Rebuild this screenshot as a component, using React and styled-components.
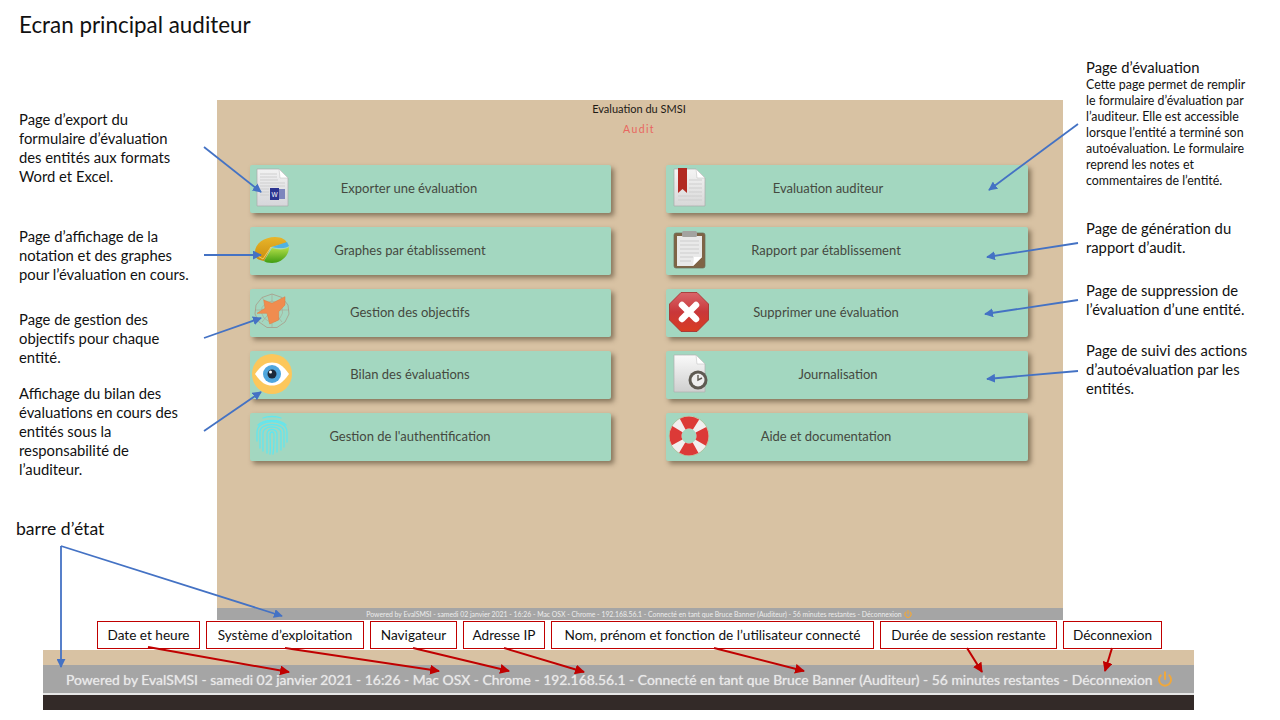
import styled, { createGlobalStyle } from "styled-components";
import { Power } from "lucide-react";

const GlobalStyle = createGlobalStyle`
  html, body {
    margin: 0;
    padding: 0;
    background: #fff;
  }
`;

const Slide = styled.div`
  position: relative;
  width: 1280px;
  height: 720px;
  overflow: hidden;
  background: #fff;
  color: #111;
  font-family: Lato, "Open Sans", sans-serif;
`;

const Title = styled.h1`
  margin: 0;
  height: 58px;
  box-sizing: border-box;
  padding: 11px 0 0 19px;
  font-size: 22.4px;
  line-height: 28px;
  font-weight: 400;
`;

const Main = styled.div`
  display: grid;
  grid-template-columns: 217px 846px 217px;
  height: 562px;
`;

const NoteColumn = styled.div`
  display: flex;
  flex-direction: column;
  padding-left: ${(p) => p.$left}px;
`;

const Note = styled.p`
  margin: ${(p) => p.$top}px 0 0 ${(p) => p.$shift || 0}px;
  font-size: ${(p) => p.$size || 14.8}px;
  line-height: 19px;
  white-space: nowrap;
`;

const NoteDetail = styled.span`
  display: block;
  font-size: 12.4px;
  line-height: 16px;
`;

const Panel = styled.div`
  margin-top: 42px;
  display: flex;
  flex-direction: column;
  background: #d8c2a3;
`;

const AppName = styled.div`
  margin-top: 2px;
  padding-right: 2px;
  text-align: center;
  font-size: 11px;
  line-height: 13px;
  color: #1d1a16;
`;

const RoleName = styled.div`
  margin-top: 8px;
  padding-right: 2px;
  text-align: center;
  font-size: 10.5px;
  line-height: 13px;
  letter-spacing: 1.4px;
  color: #e8665f;
`;

const CardGrid = styled.div`
  flex: 1;
  display: grid;
  grid-template-columns: 361px 362px;
  grid-auto-flow: column;
  grid-template-rows: repeat(5, 48px);
  column-gap: 55px;
  row-gap: 14px;
  padding: 29px 0 0 33px;
`;

const Card = styled.div`
  display: grid;
  grid-template-columns: 320px 1fr;
  align-items: center;
  border-radius: 2px;
  background: #a3d7c0;
  box-shadow: 3px 3px 5px rgba(70, 55, 35, 0.55);
`;

const CardIcon = styled.svg`
  grid-area: 1 / 1;
  justify-self: start;
  width: 40px;
  height: 40px;
  margin-left: ${(p) => p.$left}px;
  margin-top: -2px;
  overflow: visible;
`;

const CardLabel = styled.span`
  grid-area: 1 / 1;
  justify-self: center;
  margin: 0 0 2px ${(p) => p.$nudge || 0}px;
  font-size: 13px;
  color: #45493f;
`;

const PanelStatus = styled.div`
  display: flex;
  align-items: center;
  justify-content: center;
  gap: 2px;
  height: 12px;
  padding-right: 2px;
  background: #a5a5a5;
  font-size: 6.85px;
  color: #ececec;
  white-space: nowrap;
`;

const Callouts = styled.div`
  display: flex;
  gap: 6px;
  margin: 1px 0 0 97px;
`;

const Callout = styled.div`
  box-sizing: border-box;
  width: ${(p) => p.$width}px;
  height: 28px;
  border: 1px solid #c00000;
  background: #fff;
  text-align: center;
  font-size: 13.6px;
  line-height: 26px;
  white-space: nowrap;
`;

const BarCrop = styled.div`
  display: flex;
  flex-direction: column;
  width: 1151px;
  height: 60px;
  margin: 1px 0 0 43px;
  background: #d8c2a3;
`;

const BarStatus = styled.div`
  display: flex;
  align-items: center;
  gap: 4px;
  height: 28px;
  margin-top: 15px;
  padding-left: 23px;
  background: #a5a5a5;
  font-size: 13.9px;
  color: #e9e9e9;
  text-shadow: 0 0 1px rgba(255, 255, 255, 0.6);
  white-space: nowrap;
`;

const BarFooter = styled.div`
  flex: 1;
  border-top: 2px solid #e6e6e6;
  background: #332a28;
`;

const Arrows = styled.svg`
  position: absolute;
  inset: 0;
  width: 1280px;
  height: 720px;
  pointer-events: none;
`;

const WordIcon = () => (
  <CardIcon $left={2} viewBox="0 0 40 40">
    <defs>
      <linearGradient id="paperA" x1="0" y1="0" x2="0" y2="1">
        <stop offset="0" stopColor="#f2f2f2" />
        <stop offset="1" stopColor="#d6d6da" />
      </linearGradient>
    </defs>
    <path d="M5 1H27L36 10V38H5Z" fill="url(#paperA)" stroke="#aaa" strokeWidth="0.7" />
    <path d="M27 1L36 10H28Z" fill="#fff" stroke="#bbb" strokeWidth="0.5" />
    <path d="M8 6H25M8 9H25M8 12H26M8 15H33M8 18H33M8 21H17M8 24H17M8 27H17" stroke="#ccc" strokeWidth="0.9" />
    <rect x="22" y="21" width="11" height="10" fill="#7d85bd" />
    <rect x="18" y="20" width="9" height="12" fill="#2b3390" />
    <text x="22.5" y="28.5" fontSize="6.5" fill="#fff" textAnchor="middle" fontFamily="Liberation Sans">W</text>
  </CardIcon>
);

const PieIcon = () => (
  <CardIcon $left={2} viewBox="0 0 40 40">
    <defs>
      <linearGradient id="pieY" x1="0" y1="0" x2="0" y2="1">
        <stop offset="0" stopColor="#e8b52a" />
        <stop offset="1" stopColor="#c98c0e" />
      </linearGradient>
      <linearGradient id="pieG" x1="0" y1="0" x2="0" y2="1">
        <stop offset="0" stopColor="#b6e04a" />
        <stop offset="1" stopColor="#3f9c12" />
      </linearGradient>
    </defs>
    <path d="M3 24C2 14 12 7 23 7C30 7 34 10 35 13L19 17L12 31C6 30 3 28 3 24Z" fill="url(#pieY)" />
    <path d="M20 17L35 12L37 16C35 18 28 19 20 17Z" fill="#4fb2e4" />
    <path d="M20 18C26 20 33 20 37 17C37 27 28 33 20 33C16 33 13 32 12 31Z" fill="url(#pieG)" />
    <path d="M4 25L11 29L19 17" fill="none" stroke="#f7dc70" strokeWidth="0.8" />
  </CardIcon>
);

const RadarIcon = () => (
  <CardIcon $left={2} viewBox="0 0 40 40">
    <g fill="none" stroke="#a89a88" strokeWidth="0.8">
      <path d="M20 2L30 5.5L36 13L37 22L33 30L25 35.5L15 35.5L7 30L3 22L4 13L10 5.5Z" />
      <path d="M20 9L26 11L30 15.500L30.500 21L28 26L23 29.500L17 29.500L12 26L9.500 21L10 15.500L14 11Z" strokeWidth="0.5" />
      <path d="M20 2V35M10 5.5L30 30M30 5.5L10 30M3 18H37" strokeWidth="0.5" />
    </g>
    <path
      d="M11.700 8L20 11.300L33 4.700L33 13L26.700 19.700L26.700 28L17.700 32L15 21.300L5 21.300L13 16.300Z"
      fill="#f08c4f"
      stroke="#e07a3c"
      strokeWidth="0.5"
    />
  </CardIcon>
);

const EyeIcon = () => (
  <CardIcon $left={2} viewBox="0 0 40 40">
    <circle cx="20" cy="20" r="20" fill="#fcc75b" />
    <path d="M3 20C9 11 14 8.500 20 8.500C26 8.500 31 11 37 20C31 29 26 31.500 20 31.500C14 31.500 9 29 3 20Z" fill="#fff" />
    <circle cx="20" cy="20" r="9" fill="#4fa6dd" />
    <circle cx="20" cy="20" r="4.500" fill="#1e2b3a" />
    <circle cx="18.500" cy="18" r="1.500" fill="#fff" />
  </CardIcon>
);

const FingerprintIcon = () => (
  <CardIcon $left={2} viewBox="0 0 40 40">
    <g fill="none" stroke="#62e6ee" strokeWidth="1.3" strokeLinecap="round">
      <path d="M11 2C16 0 24 0 29 2" />
      <path d="M6 9C12 3 28 3 34 9" />
      <path d="M5 25V16C5 2 35 2 35 16V26" />
      <path d="M8 32V16C8 6 32 6 32 16V31" />
      <path d="M11 35V17C11 9 29 9 29 17V34" />
      <path d="M15 37V18C15 12 25 12 25 18V36" />
      <path d="M18 38C19 32 18 24 18 19C18 15 22 15 22 19C22 26 22 32 21 38" />
    </g>
  </CardIcon>
);

const BookmarkIcon = () => (
  <CardIcon $left={3} viewBox="0 0 40 40">
    <defs>
      <linearGradient id="paperB" x1="0" y1="0" x2="0" y2="1">
        <stop offset="0" stopColor="#f4f4f4" />
        <stop offset="1" stopColor="#d8d8d8" />
      </linearGradient>
    </defs>
    <path d="M5 1H27L36 10V38H5Z" fill="url(#paperB)" stroke="#aaa" strokeWidth="0.7" />
    <path d="M27 1L36 10H28Z" fill="#fff" stroke="#bbb" strokeWidth="0.5" />
    <path d="M20 12H33M20 16H33M20 20H33M20 24H33M9 28H33M9 32H33" stroke="#ccc" strokeWidth="0.9" />
    <path d="M9 0H18V25L13.500 21L9 25Z" fill="#b22a22" />
  </CardIcon>
);

const ClipboardIcon = () => (
  <CardIcon $left={3} viewBox="0 0 40 40">
    <rect x="5" y="3" width="31" height="35" rx="2" fill="#7f6446" stroke="#6a6a58" strokeWidth="0.7" />
    <path d="M8 6H33V27L24 36H8Z" fill="#e9e9e9" />
    <path d="M24 36L33 27H25Z" fill="#fff" />
    <path d="M11 11H30M11 15H30M11 19H30M11 23H30M11 27H24M11 31H22" stroke="#c9c9c9" strokeWidth="0.9" />
    <rect x="13" y="1" width="15" height="6" rx="1.500" fill="#a3a3a0" />
  </CardIcon>
);

const StopIcon = () => (
  <CardIcon $left={3} viewBox="0 0 40 40">
    <defs>
      <linearGradient id="stopRed" x1="0" y1="0" x2="0" y2="1">
        <stop offset="0" stopColor="#d9666a" />
        <stop offset="0.5" stopColor="#c9373a" />
        <stop offset="1" stopColor="#d93c22" />
      </linearGradient>
    </defs>
    <path d="M12 0.500H28L39.500 12V28L28 39.500H12L0.500 28V12Z" fill="url(#stopRed)" stroke="#a52a2a" strokeWidth="0.8" />
    <path d="M13 13L27 27M27 13L13 27" stroke="#fff" strokeWidth="6.500" strokeLinecap="round" />
  </CardIcon>
);

const ClockDocIcon = () => (
  <CardIcon $left={3} viewBox="0 0 40 40">
    <defs>
      <linearGradient id="paperC" x1="0" y1="0" x2="0" y2="1">
        <stop offset="0" stopColor="#fafafa" />
        <stop offset="1" stopColor="#cfcfcf" />
      </linearGradient>
    </defs>
    <path d="M5 1H27L36 10V38H5Z" fill="url(#paperC)" stroke="#b0b0b0" strokeWidth="0.7" />
    <path d="M27 1L36 10H28Z" fill="#fff" stroke="#bbb" strokeWidth="0.5" />
    <circle cx="29" cy="26" r="9.500" fill="#5e5a52" />
    <circle cx="29" cy="26" r="6.500" fill="#eee" />
    <path d="M29 21V26L33 24" fill="none" stroke="#5e5a52" strokeWidth="1.400" />
  </CardIcon>
);

const LifebuoyIcon = () => (
  <CardIcon $left={3} viewBox="0 0 40 40">
    <circle cx="20" cy="20" r="19.700" fill="none" stroke="#b7a76e" strokeWidth="0.6" />
    <circle cx="20" cy="20" r="13.500" fill="none" stroke="#f2eeee" strokeWidth="12" />
    <circle
      cx="20"
      cy="20"
      r="13.500"
      fill="none"
      stroke="#dc3a37"
      strokeWidth="12"
      strokeDasharray="14 7.206"
      strokeDashoffset="7"
    />
  </CardIcon>
);

const leftCards = [
  { label: "Exporter une évaluation", icon: <WordIcon />, nudge: -2 },
  { label: "Graphes par établissement", icon: <PieIcon /> },
  { label: "Gestion des objectifs", icon: <RadarIcon /> },
  { label: "Bilan des évaluations", icon: <EyeIcon /> },
  { label: "Gestion de l'authentification", icon: <FingerprintIcon /> },
];

const rightCards = [
  { label: "Evaluation auditeur", icon: <BookmarkIcon />, nudge: 4 },
  { label: "Rapport par établissement", icon: <ClipboardIcon /> },
  { label: "Supprimer une évaluation", icon: <StopIcon /> },
  { label: "Journalisation", icon: <ClockDocIcon />, nudge: 24 },
  { label: "Aide et documentation", icon: <LifebuoyIcon /> },
];

const callouts = [
  { text: "Date et heure", width: 103 },
  { text: "Système d’exploitation", width: 158 },
  { text: "Navigateur", width: 87 },
  { text: "Adresse IP", width: 82 },
  { text: "Nom, prénom et fonction de l’utilisateur connecté", width: 323 },
  { text: "Durée de session restante", width: 177 },
  { text: "Déconnexion", width: 99 },
];

const blueArrows = [
  [204, 147, 261, 192],
  [204, 255, 261, 255],
  [204, 338, 261, 318],
  [204, 431, 261, 392],
  [1078, 124, 989, 190],
  [1078, 243, 987, 257],
  [1078, 300, 985, 314],
  [1078, 371, 987, 379],
  [61, 546, 61, 667],
  [61, 546, 282, 616],
];

const redArrows = [
  [148, 647, 289, 672],
  [285, 648, 439, 671],
  [413, 648, 509, 671],
  [504, 648, 584, 672],
  [714, 648, 804, 671],
  [967, 648, 982, 672],
  [1112, 648, 1105, 671],
];

const statusText =
  "Powered by EvalSMSI - samedi 02 janvier 2021 - 16:26 - Mac OSX - Chrome - 192.168.56.1 - Connecté en tant que Bruce Banner (Auditeur) - 56 minutes restantes - Déconnexion";

const App = () => {
  return (
    <Slide>
      <GlobalStyle />
      <Title>Ecran principal auditeur</Title>
      <Main>
        <NoteColumn $left={19}>
          <Note $top={52}>
            Page d’export du
            <br />
            formulaire d’évaluation
            <br />
            des entités aux formats
            <br />
            Word et Excel.
          </Note>
          <Note $top={41}>
            Page d’affichage de la
            <br />
            notation et des graphes
            <br />
            pour l’évaluation en cours.
          </Note>
          <Note $top={26}>
            Page de gestion des
            <br />
            objectifs pour chaque
            <br />
            entité.
          </Note>
          <Note $top={17}>
            Affichage du bilan des
            <br />
            évaluations en cours des
            <br />
            entités sous la
            <br />
            responsabilité de
            <br />
            l’auditeur.
          </Note>
          <Note $top={40} $shift={-3} $size={17.6}>
            barre d’état
          </Note>
        </NoteColumn>

        <Panel>
          <AppName>Evaluation du SMSI</AppName>
          <RoleName>Audit</RoleName>
          <CardGrid>
            {[...leftCards, ...rightCards].map((card) => (
              <Card key={card.label}>
                {card.icon}
                <CardLabel $nudge={card.nudge}>{card.label}</CardLabel>
              </Card>
            ))}
          </CardGrid>
          <PanelStatus>
            {statusText}
            <Power size={8} color="#f0a83c" strokeWidth={3.5} />
          </PanelStatus>
        </Panel>

        <NoteColumn $left={23}>
          <Note $top={0}>
            Page d’évaluation
            <NoteDetail>
              Cette page permet de remplir
              <br />
              le formulaire d’évaluation par
              <br />
              l’auditeur. Elle est accessible
              <br />
              lorsque l’entité a terminé son
              <br />
              autoévaluation. Le formulaire
              <br />
              reprend les notes et
              <br />
              commentaires de l’entité.
            </NoteDetail>
          </Note>
          <Note $top={30}>
            Page de génération du
            <br />
            rapport d’audit.
          </Note>
          <Note $top={24}>
            Page de suppression de
            <br />
            l’évaluation d’une entité.
          </Note>
          <Note $top={22}>
            Page de suivi des actions
            <br />
            d’autoévaluation par les
            <br />
            entités.
          </Note>
        </NoteColumn>
      </Main>

      <Callouts>
        {callouts.map((c) => (
          <Callout key={c.text} $width={c.width}>
            {c.text}
          </Callout>
        ))}
      </Callouts>

      <BarCrop>
        <BarStatus>
          {statusText}
          <Power size={16} color="#f0a83c" strokeWidth={3} />
        </BarStatus>
        <BarFooter />
      </BarCrop>

      <Arrows viewBox="0 0 1280 720">
        <defs>
          <marker id="headBlue" markerWidth="5" markerHeight="5" refX="4.5" refY="2.5" orient="auto">
            <path d="M0 0L5 2.500L0 5Z" fill="#4472c4" />
          </marker>
          <marker id="headRed" markerWidth="5" markerHeight="5" refX="4.5" refY="2.5" orient="auto">
            <path d="M0 0L5 2.500L0 5Z" fill="#c00000" />
          </marker>
        </defs>
        {blueArrows.map(([x1, y1, x2, y2]) => (
          <line
            key={`${x2}-${y2}`}
            x1={x1}
            y1={y1}
            x2={x2}
            y2={y2}
            stroke="#4472c4"
            strokeWidth="1.8"
            markerEnd="url(#headBlue)"
          />
        ))}
        {redArrows.map(([x1, y1, x2, y2]) => (
          <line
            key={`${x2}-${y2}`}
            x1={x1}
            y1={y1}
            x2={x2}
            y2={y2}
            stroke="#c00000"
            strokeWidth="2"
            markerEnd="url(#headRed)"
          />
        ))}
      </Arrows>
    </Slide>
  );
};

export default App;
